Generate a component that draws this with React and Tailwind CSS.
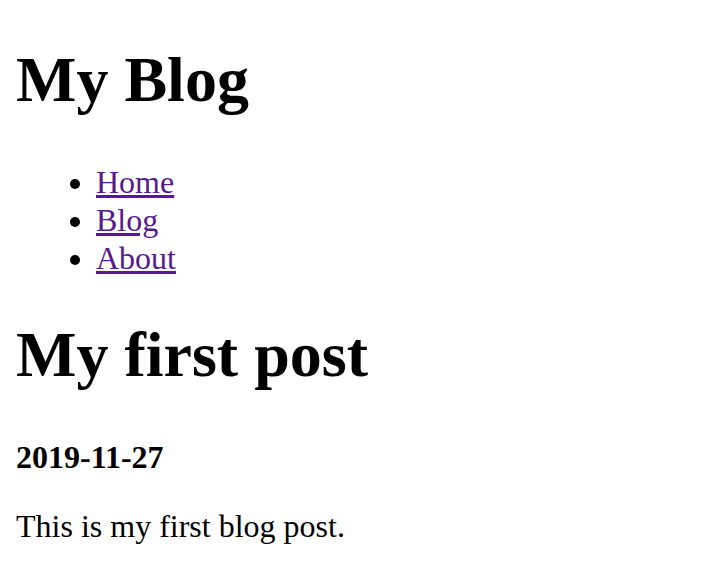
export default function App() {
    const links = ['Home', 'Blog', 'About'];

    return (
        <div className="min-h-[582px] bg-white px-4 pt-[42.88px] pb-4 font-['Liberation_Serif',serif] text-black">
            <h1 className="text-[64px] font-bold leading-[73.6px]">My Blog</h1>

            <ul className="mt-[46.88px] mb-[30px] list-disc pl-20 text-[32px] leading-[38px]">
                {links.map((l) => (
                    <li key={l}>
                        <a href="#" className="text-[#551a8b] underline">{l}</a>
                    </li>
                ))}
            </ul>

            <h1 className="mt-[40.88px] text-[64px] font-bold leading-[73.6px]">My first post</h1>
            <h4 className="mt-[46.88px] text-[32px] font-bold leading-[36.8px]">2019-11-27</h4>
            <p className="mt-[32.56px] text-[32px] leading-[36.8px]">This is my first blog post.</p>
        </div>
    );
}
